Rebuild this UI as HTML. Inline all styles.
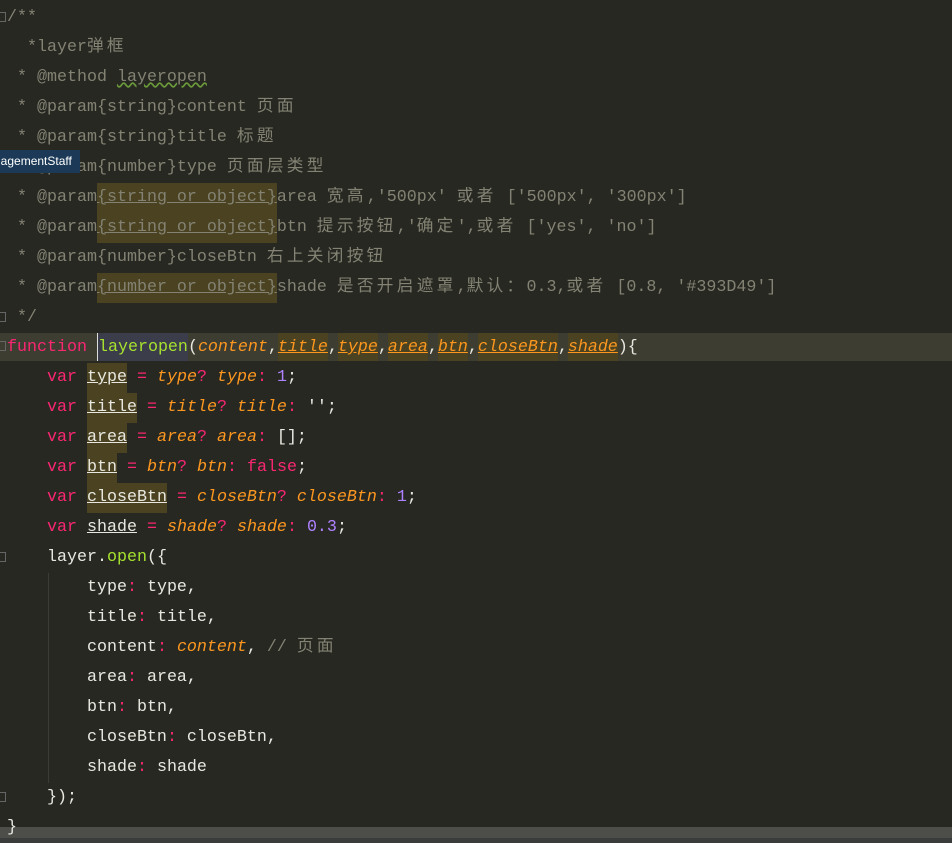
<!DOCTYPE html>
<html><head><meta charset="utf-8"><style>
body{margin:0;width:952px;height:843px;background:#272822;overflow:hidden;position:relative;font-family:"Liberation Mono","Noto Sans CJK SC",monospace;font-size:16.67px;color:#e8e8e0}
.l{position:absolute;left:7px;height:30px;line-height:30px;white-space:pre;width:945px}
.c{color:#838273}
.z{letter-spacing:3.3px}
.k{color:#f92672}
.f{color:#a6e22e}
.p{color:#fd971f;font-style:italic}
.u{text-decoration:underline}
.n{color:#ae81ff}
.hl{background:#4a4220;display:inline-block;height:30px}
.cur{position:absolute;left:0;top:333px;width:952px;height:28px;background:#3e3d32}
.tip{position:absolute;left:0;top:150px;width:80px;height:23px;background:#1c3a57;color:#fff;font:12px "Liberation Sans",sans-serif;line-height:23px;overflow:hidden;white-space:nowrap;text-indent:-6px}
.g{position:absolute;left:48px;top:573px;width:1px;height:210px;background:#3b3c36}
.bot{position:absolute;left:0;top:827px;width:952px;height:11px;background:#4d4e49}
.bot2{position:absolute;left:0;top:838px;width:952px;height:5px;background:#3a3c3c}
.fm{position:absolute;left:0;width:6px;height:10px;border:1px solid #666;border-left:none;box-sizing:border-box}
</style></head><body>
<div class="cur"></div>
<div class="g"></div>
<div class="fm" style="top:12px"></div>
<div class="fm" style="top:312px"></div>
<div class="fm" style="top:341px"></div>
<div class="fm" style="top:552px"></div>
<div class="fm" style="top:792px"></div>
<div class="l c" style="top:3px">/**</div>
<div class="l c" style="top:33px">  *layer<span class="z">弹框</span></div>
<div class="l c" style="top:63px"> * @method <span class="u" style="text-decoration-color:#6a9a3a;text-decoration-style:wavy">layeropen</span></div>
<div class="l c" style="top:93px"> * @param{string}content <span class="z">页面</span></div>
<div class="l c" style="top:123px"> * @param{string}title <span class="z">标题</span></div>
<div class="l c" style="top:153px"> * @param{number}type <span class="z">页面层类型</span></div>
<div class="l c" style="top:183px"> * @param<span class="hl u">{string or object}</span>area <span class="z">宽高</span>,'500px' <span class="z">或者</span> ['500px', '300px']</div>
<div class="l c" style="top:213px"> * @param<span class="hl u">{string or object}</span>btn <span class="z">提示按钮</span>,'<span class="z">确定</span>',<span class="z">或者</span> ['yes', 'no']</div>
<div class="l c" style="top:243px"> * @param{number}closeBtn <span class="z">右上关闭按钮</span></div>
<div class="l c" style="top:273px"> * @param<span class="hl u">{number or object}</span>shade <span class="z">是否开启遮罩</span>,<span class="z">默认：</span>0.3,<span class="z">或者</span> [0.8, '#393D49']</div>
<div class="l c" style="top:303px"> */</div>
<div class="l" style="top:333px"><span class="k">function</span> <span class="f" style="background:#3b3d4a;display:inline-block;height:28px;border-left:1px solid #ddd">layeropen</span>(<span class="p">content</span>,<span class="p u hl" style="height:28px">title</span>,<span class="p u hl" style="height:28px">type</span>,<span class="p u hl" style="height:28px">area</span>,<span class="p u hl" style="height:28px">btn</span>,<span class="p u hl" style="height:28px">closeBtn</span>,<span class="p u hl" style="height:28px">shade</span>){</div>
<div class="l" style="top:363px">    <span class="k">var</span> <span class="hl u">type</span> <span class="k">=</span> <span class="p">type</span><span class="k">?</span> <span class="p">type</span><span class="k">:</span> <span class="n">1</span>;</div>
<div class="l" style="top:393px">    <span class="k">var</span> <span class="hl u">title</span> <span class="k">=</span> <span class="p">title</span><span class="k">?</span> <span class="p">title</span><span class="k">:</span> '';</div>
<div class="l" style="top:423px">    <span class="k">var</span> <span class="hl u">area</span> <span class="k">=</span> <span class="p">area</span><span class="k">?</span> <span class="p">area</span><span class="k">:</span> [];</div>
<div class="l" style="top:453px">    <span class="k">var</span> <span class="hl u">btn</span> <span class="k">=</span> <span class="p">btn</span><span class="k">?</span> <span class="p">btn</span><span class="k">:</span> <span class="k">false</span>;</div>
<div class="l" style="top:483px">    <span class="k">var</span> <span class="hl u">closeBtn</span> <span class="k">=</span> <span class="p">closeBtn</span><span class="k">?</span> <span class="p">closeBtn</span><span class="k">:</span> <span class="n">1</span>;</div>
<div class="l" style="top:513px">    <span class="k">var</span> <span class="u">shade</span> <span class="k">=</span> <span class="p">shade</span><span class="k">?</span> <span class="p">shade</span><span class="k">:</span> <span class="n">0.3</span>;</div>
<div class="l" style="top:543px">    layer.<span class="f">open</span>({</div>
<div class="l" style="top:573px">        type<span class="k">:</span> type,</div>
<div class="l" style="top:603px">        title<span class="k">:</span> title,</div>
<div class="l" style="top:633px">        content<span class="k">:</span> <span class="p">content</span>, <span class="c">// <span class="z">页面</span></span></div>
<div class="l" style="top:663px">        area<span class="k">:</span> area,</div>
<div class="l" style="top:693px">        btn<span class="k">:</span> btn,</div>
<div class="l" style="top:723px">        closeBtn<span class="k">:</span> closeBtn,</div>
<div class="l" style="top:753px">        shade<span class="k">:</span> shade</div>
<div class="l" style="top:783px">    });</div>
<div class="bot"></div>
<div class="bot2"></div>
<div class="l" style="top:813px">}</div>
<div class="tip">nagementStaff</div>
</body></html>
